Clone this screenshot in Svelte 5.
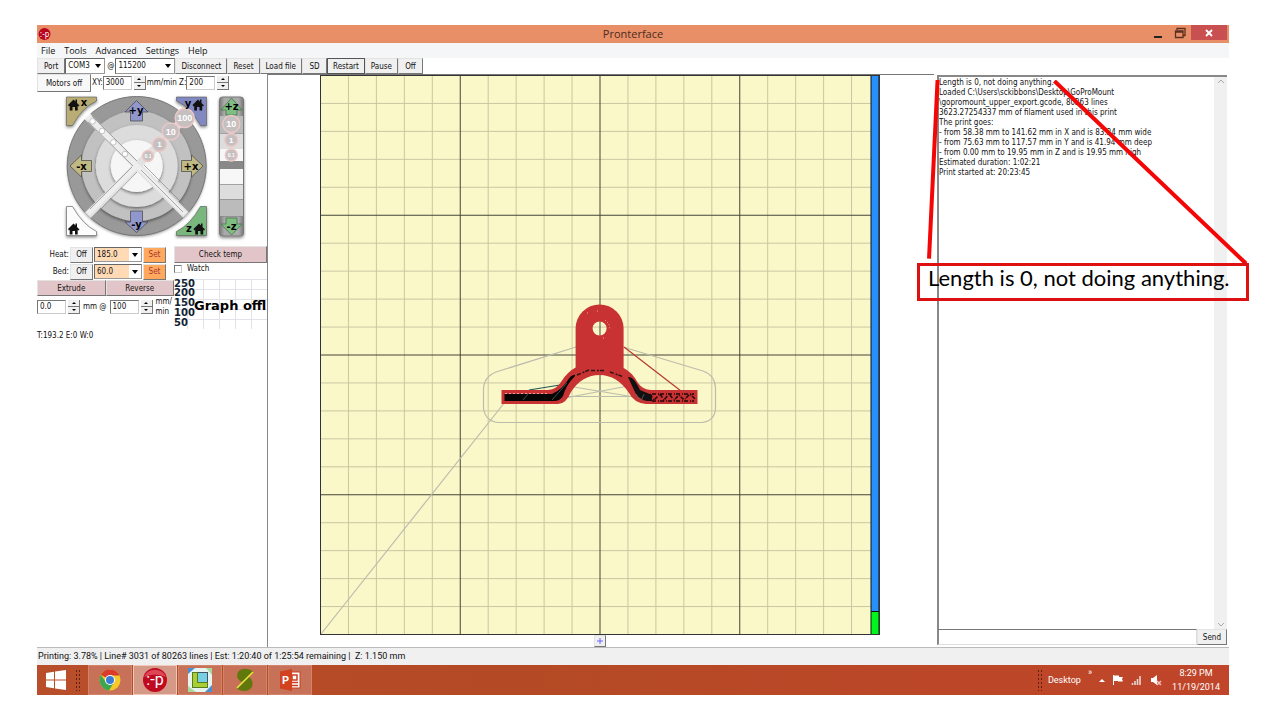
<script>
    const menus = ["File", "Tools", "Advanced", "Settings", "Help"];
    const actions = ["Disconnect", "Reset", "Load file", "SD", "Restart", "Pause", "Off"];

    let xySpeed = "3000";
    let zSpeed = "200";
    let extrudeLength = "0.0";
    let extrudeSpeed = "100";
    let command = "";
    let watch = false;

    const log = [
        "Length is 0, not doing anything.",
        "Loaded C:\\Users\\sckibbons\\Desktop\\GoProMount",
        "\\gopromount_upper_export.gcode, 80263 lines",
        "3623.27254337 mm of filament used in this print",
        "The print goes:",
        "- from 58.38 mm to 141.62 mm in X and is 83.24 mm wide",
        "- from 75.63 mm to 117.57 mm in Y and is 41.94 mm deep",
        "- from 0.00 mm to 19.95 mm in Z and is 19.95 mm high",
        "Estimated duration: 1:02:21",
        "Print started at: 20:23:45"
    ].join("\n");

    // 200mm bed, one line per 10mm
    const cell = 27.95;
    const lines = Array.from({ length: 19 }, (_, i) => i + 1);
    const minor = lines.filter((n) => n % 5 !== 0);
    const major = lines.filter((n) => n % 5 === 0);

    const steps = [
        { x: 148, y: 156, r: 5.5, size: 5, label: "0.1" },
        { x: 159.5, y: 144.5, r: 7, size: 8, label: "1" },
        { x: 170.7, y: 131.5, r: 8.5, size: 9, label: "10" },
        { x: 184.7, y: 118, r: 9.5, size: 9, label: "100" },
        { x: 231.3, y: 124, r: 8.5, size: 9, label: "10" },
        { x: 231.3, y: 140, r: 6.5, size: 8, label: "1" },
        { x: 231.3, y: 155, r: 6, size: 5, label: "0.1" }
    ];
    const dots = [[92.5, 121.3], [102, 131], [113.3, 142.3], [125, 154]];
    const houses = [[74, 104.5], [198.5, 104.5], [74, 228.5], [199.5, 228.5]];
</script>

<div class="window">
    <header class="titlebar">
        <svg class="app-icon" viewBox="0 0 14 14" aria-hidden="true">
            <circle cx="7.500" cy="7" r="6" fill="#b8061d" />
            <text x="7.500" y="10" text-anchor="middle" font-size="8" fill="#fff">:-p</text>
        </svg>
        <h1>Pronterface</h1>
        <div class="window-buttons">
            <button aria-label="Minimize"><svg width="10" height="10"><path d="M1 9h8" stroke="#222" stroke-width="2" /></svg></button>
            <button aria-label="Restore"><svg width="12" height="12"><path d="M3 3V1.500h8v7H9M1.500 4h7.500v6.500h-7.500zM1.500 5h7.500" fill="none" stroke="#5b3020" stroke-width="1.300" /></svg></button>
            <button class="close" aria-label="Close"><svg width="8" height="8"><path d="M1 1l6 6M7 1l-6 6" stroke="#fff" stroke-width="1.800" /></svg></button>
        </div>
    </header>

    <nav class="menubar">
        {#each menus as menu}
        <button>{menu}</button>
        {/each}
    </nav>

    <div class="toolbar">
        <button class="btn port">Port</button>
        <span class="combo com"><select aria-label="Port"><option>COM3</option></select></span>
        <span class="at">@</span>
        <span class="combo baud"><select aria-label="Baud rate"><option>115200</option></select></span>
        {#each actions as action}
        <button class="btn" class:focused={action === "Restart"}>{action}</button>
        {/each}
    </div>

    <main>
        <section class="controls">
            <div class="row speeds">
                <button class="btn motors">Motors off</button>
                <label for="xy">XY:</label>
                <span class="spin"><input id="xy" bind:value={xySpeed} /><span class="arrows"><button aria-label="Faster XY"></button><button class="down" aria-label="Slower XY"></button></span></span>
                <label for="z">mm/min Z:</label>
                <span class="spin"><input id="z" bind:value={zSpeed} /><span class="arrows"><button aria-label="Faster Z"></button><button class="down" aria-label="Slower Z"></button></span></span>
            </div>

            <svg class="jog" viewBox="37 92 230 153" role="img" aria-label="Jog controls">
                <defs>
                    <filter id="soft" x="-10%" y="-10%" width="120%" height="125%">
                        <feDropShadow dx="0" dy="1.500" stdDeviation="1.500" flood-color="#000" flood-opacity="0.500" />
                    </filter>
                    <linearGradient id="bar" x1="0" x2="1" y1="0" y2="0">
                        <stop offset="0" stop-color="#777" /><stop offset="0.200" stop-color="#aaa" /><stop offset="0.800" stop-color="#aaa" /><stop offset="1" stop-color="#777" />
                    </linearGradient>
                    <mask id="quarters">
                        <rect x="37" y="92" width="230" height="153" fill="#fff" />
                        <path d="M82 111L192 221M82 221L192 111" stroke="#000" stroke-width="8" />
                    </mask>
                </defs>
                <circle cx="136.700" cy="166" r="69" fill="#e2e2e2" filter="url(#soft)" />
                <g mask="url(#quarters)">
                    <circle cx="136.700" cy="166" r="69.500" fill="#999" stroke="#777" />
                    <circle cx="136.700" cy="166" r="55" fill="#c1c1c1" filter="url(#soft)" />
                    <circle cx="136.700" cy="166" r="41" fill="#dcdcdc" filter="url(#soft)" />
                    <circle cx="136.700" cy="166" r="26" fill="#f6f6f6" filter="url(#soft)" />
                </g>
                <path d="M88 117L185 214M88 214L137 166" stroke="#eee" stroke-width="5" />
                <path d="M88 122L133 166M92 116L137 161M90 209l42-42M97 213l40-41M141 170l42 42M184 205l-40-40" stroke="#888" stroke-width="0.700" />
                {#each dots as [x, y]}
                <circle cx={x} cy={y} r="2.800" fill="#fff" stroke="#aaa" stroke-width="0.700" />
                {/each}

                <g stroke="#555" stroke-width="0.600" filter="url(#soft)">
                    <path d="M66.500 97h30v4q-14 6-24 24.500h-6z" fill="#b9ad74" />
                    <path d="M206.500 97h-30v4q14 6 24 24.500h6z" fill="#8289c0" />
                    <path d="M66.500 235.500h30v-4q-14-7-24-25h-6z" fill="#fcfcfc" />
                    <path d="M206.500 235.500h-30v-4q14-7 24-25h6z" fill="#79b77d" />
                </g>
                {#each houses as [x, y]}
                <path transform="translate({x} {y}) translate(-6 -5)" d="M0 5.500L5.500 0 7.500 2V0H9v3.500L11.500 6 10.500 7 9.700 6.300V11H7V7.500H4.500V11H1.700V6.300L1 7z" fill="#111" />
                {/each}

                <g stroke="#444" stroke-width="0.700">
                    <path d="M136.500 100.500L148 112h-5.500v9h-12v-9H125z" fill="#9097cc" />
                    <path d="M136.500 232.500L148 222h-5.500v-11h-12v11H125z" fill="#9097cc" />
                    <path d="M70 166L81.500 155v5.500h10v11h-10v5.500z" fill="#c1b984" />
                    <path d="M203 166L191.500 155v5.500h-10v11h10v5.500z" fill="#c1b984" />
                </g>

                <rect x="219.500" y="97" width="24" height="139" rx="3" fill="url(#bar)" stroke="#777" filter="url(#soft)" />
                <rect x="220" y="116" width="23" height="17" fill="#bbb" />
                <rect x="220" y="133" width="23" height="16" fill="#ddd" />
                <rect x="220" y="149" width="23" height="12" fill="#f7f7f7" />
                <rect x="220" y="161" width="23" height="8" fill="#888" />
                <rect x="220" y="169" width="23" height="15" fill="#f7f7f7" />
                <rect x="220" y="184" width="23" height="15" fill="#ddd" />
                <rect x="220" y="199" width="23" height="17" fill="#bbb" />
                <path d="M220 184.500h23M220 199.500h23M220 216.500h23M220 133.500h23" stroke="#888" stroke-width="0.700" />
                <g stroke="#3d6f40" stroke-width="0.700" fill="#80bd83">
                    <path d="M231.500 98L242 110h-5v5h-11v-5h-5z" />
                    <path d="M231.500 235L242 224h-5v-6h-11v6h-5z" />
                </g>

                {#each steps as step}
                <circle cx={step.x} cy={step.y} r={step.r} fill="#c5bfbf" stroke="#ecc8c8" stroke-width="1.500" />
                <text class="step" x={step.x} y={step.y + step.size * 0.36} font-size={step.size}>{step.label}</text>
                {/each}
                <g class="axis" font-size="10">
                    <text x="136" y="114">+y</text><text x="136.500" y="228">-y</text>
                    <text x="81.500" y="170">-x</text><text x="191" y="170">+x</text>
                    <text x="231.500" y="110">+z</text><text x="231.500" y="230">-z</text>
                    <text x="84" y="106">x</text><text x="188" y="107">y</text><text x="189" y="232">z</text>
                </g>
            </svg>

            <div class="heat-and-graph">
                <div class="heat">
                    <div class="row heater">
                        <label for="heat">Heat:</label>
                        <button class="btn">Off</button>
                        <span class="combo warm"><select id="heat"><option>185.0</option></select></span>
                        <button class="btn set">Set</button>
                    </div>
                    <div class="row heater">
                        <label for="bed">Bed:</label>
                        <button class="btn">Off</button>
                        <span class="combo warm"><select id="bed"><option>60.0</option></select></span>
                        <button class="btn set">Set</button>
                    </div>
                    <div class="row extruder">
                        <button class="btn pink">Extrude</button>
                        <button class="btn pink">Reverse</button>
                    </div>
                    <div class="row feed">
                        <span class="spin"><input aria-label="Extrude length" bind:value={extrudeLength} /><span class="arrows"><button aria-label="More"></button><button class="down" aria-label="Less"></button></span></span>
                        <span>mm @</span>
                        <span class="spin"><input aria-label="Extrude speed" bind:value={extrudeSpeed} /><span class="arrows"><button aria-label="Faster"></button><button class="down" aria-label="Slower"></button></span></span>
                        <span class="unit">mm/<br />min</span>
                    </div>
                </div>
                <div class="temps">
                    <button class="btn pink">Check temp</button>
                    <label class="watch"><input type="checkbox" bind:checked={watch} />Watch</label>
                    <svg class="graph" viewBox="0 0 93 50" role="img" aria-label="Temperature graph">
                        <path d="M0 .5h93M0 10.500h93M0 20.500h93M0 30.500h93M0 40.500h93M13.500 0v50M29.500 0v50M45.500 0v50M61.500 0v50M77.500 0v50" stroke="#e2e2ea" />
                        <g font-size="10" fill="#123">
                            <text x="0" y="8">250</text><text x="0" y="17">200</text><text x="0" y="27">150</text>
                            <text x="0" y="37">100</text><text x="0" y="47">50</text>
                        </g>
                        <text x="20" y="31" font-size="13">Graph offl</text>
                    </svg>
                </div>
            </div>
            <p class="reading">T:193.2 E:0 W:0</p>
        </section>

        <section class="preview">
            <svg class="plate" viewBox="320 75 560 560" role="img" aria-label="Print preview">
                <rect x="320.500" y="75.500" width="559" height="559" fill="#faf8c8" />
                {#each minor as n}
                <path d="M{320.5 + n * cell} 75V634M320 {634.5 - n * cell}H880" stroke="#c9c7a2" />
                {/each}
                {#each major as n}
                <path d="M{320.5 + n * cell} 75V634M320 {634.5 - n * cell}H880" stroke="#44443a" />
                {/each}

                <g fill="none" stroke="#bcbcac" stroke-width="1.200">
                    <path d="M321 634L505 402" />
                    <path d="M576 347L496 372Q483.500 377 483.500 390V408Q485 421 498 422.500H702Q715.500 421 715.500 407V388Q715 375 703 371L623 347" />
                    <path d="M565 398L628 386M562 385L634 397M566 396.500H636" />
                </g>
                <path d="M529 390L560 385" stroke="#255" stroke-width="1.200" />
                <path d="M624 347L681 391" stroke="#b8382d" stroke-width="1.200" />
                <path
                    fill="#c83233"
                    fill-rule="evenodd"
                    d="M575.600 328.500A24 24 0 0 1 623.600 328.500V368Q632 372 638 383Q643 390 651 390H697.500V404H646Q634 403 629 393Q617 375 599.600 375Q582 375 571 392Q566 404 558 404H501.500V390H548Q557 389 561 382Q567 372 575.600 367.500zM592.600 328.500a7 7 0 1 0 14 0a7 7 0 1 0-14 0z"
                />
                <path d="M504.500 394H552Q562 390 570 377Q576 373 575 376Q566 385 563 396Q560 401 554 401H504.500z" fill="#050505" />
                <path d="M628 377Q634 376 640 390L652 395V401H647Q637 399 634 390z" fill="#111" />
                <path d="M577 375l12-5M591 370.500h14M610 372l14 5" stroke="#321414" stroke-width="1.500" stroke-dasharray="4 2 2 1" fill="none" />
                <path d="M650 394l4 6 6-6 4 6 5-6 5 6 5-5 5 5 6-6 5 5M652 394h42M652 401h42" stroke="#230808" stroke-width="1.500" stroke-dasharray="4 2 1 1" fill="none" />
                <path d="M505 393.500H549" stroke="#dda0a0" stroke-dasharray="2 2" />
                <path d="M552 400l15-17M523 400l5-6M636 394l3 5M644 394l-3 7" stroke="#58736c" stroke-width="0.700" />
                <path d="M587 313h1M597 311h1M605 320l4 4 1 6M603 338h1" stroke="#e7a3a0" stroke-dasharray="1 2" fill="none" />

                <rect x="870.500" y="75" width="9.500" height="560" fill="#111" />
                <rect x="871.500" y="76" width="7" height="535" fill="#2890fa" />
                <rect x="871.500" y="612" width="7" height="22" fill="#00f51c" />
                <rect x="320.500" y="75.500" width="559" height="559" fill="none" stroke="#333" />
            </svg>
            <button class="btn plus" aria-label="Zoom in"><svg width="8" height="8"><path d="M1 4h6M4 1v6" stroke="#66f" /></svg></button>
        </section>

        <section class="console">
            <div class="log">
                <textarea readonly aria-label="Log" value={log}></textarea>
                <div class="scroll" aria-hidden="true">
                    <svg width="8" height="8"><path d="M1 6l3-3 3 3" fill="none" stroke="#aaa" /></svg>
                    <svg width="8" height="8"><path d="M1 2l3 3 3-3" fill="none" stroke="#aaa" /></svg>
                </div>
            </div>
            <div class="send">
                <input aria-label="Command" bind:value={command} />
                <button class="btn">Send</button>
            </div>
            <div class="callout">
                <svg viewBox="0 0 331 182" aria-hidden="true">
                    <path d="M20.500 0L12 178M137 1L328 183" stroke="#f40606" stroke-width="4" />
                </svg>
                <p>Length is 0, not doing anything.</p>
            </div>
        </section>
    </main>

    <div class="status">Printing: 3.78% | Line# 3031 of 80263 lines | Est: 1:20:40 of 1:25:54 remaining |&nbsp; Z: 1.150 mm</div>

    <footer class="taskbar">
        <button class="start" aria-label="Start">
            <svg width="22" height="22"><path d="M1 4l8-1.200v7.700H1zM10 2.600L21 1v9.500H10zM1 11.500h8v7.700L1 18zM10 11.500h11V21l-11-1.600z" fill="#fff" /></svg>
        </button>
        <span class="grip"></span>
        <button class="task" aria-label="Chrome">
            <svg width="24" height="24">
                <circle cx="12" cy="12" r="10.500" fill="#f5c928" />
                <path d="M12 12L2.900 6.700A10.500 10.500 0 0 1 21.500 7.500H12z" fill="#da3b2b" />
                <path d="M2.900 6.700A10.500 10.500 0 0 0 11 22.500L16 14.300 12 12 8 14.300z" fill="#3fa650" />
                <circle cx="12" cy="12" r="5" fill="#fff" /><circle cx="12" cy="12" r="4" fill="#3a7bd5" />
            </svg>
        </button>
        <button class="task current" aria-label="Pronterface">
            <svg width="26" height="26"><circle cx="13" cy="13" r="12" fill="#c00a20" /><path d="M2 10a12 12 0 0 1 22 0q-11-5-22 0z" fill="#dc4656" /><text x="13" y="18" text-anchor="middle" font-size="16" fill="#fff">:-p</text></svg>
        </button>
        <button class="task" aria-label="Slicer">
            <svg width="26" height="26"><rect x="1" y="1" width="24" height="24" fill="#e6f3ee" /><path d="M1 7V1h7zM25 18v7h-7z" fill="#4b8fd0" /><path d="M1 19v6h8zM19 1h6v7z" fill="#a9d8a0" /><rect x="5.500" y="5.500" width="15" height="15" fill="#77cfe2" stroke="#456" /><path d="M5.500 5.500h5v10h10v5h-15z" fill="#a9cf35" stroke="#587c20" /></svg>
        </button>
        <button class="task" aria-label="Slic3r">
            <svg width="24" height="26"><path d="M20 4Q10-1 5 5Q2 12 9 15L19 6zM4 22q10 5 15-2q2-6-3-10L5 20z" fill="#63780c" /><path d="M4 21L20 5" stroke="#e8ee38" stroke-width="1.500" /></svg>
        </button>
        <button class="task" aria-label="PowerPoint">
            <svg width="22" height="24"><rect x="10" y="4" width="11" height="16" fill="#fff" stroke="#c93f22" /><path d="M13 7h5v5h-5zM12 14.500h7M12 17.500h7" stroke="#c93f22" stroke-width="1.500" fill="none" /><path d="M1 3.500L13 1v22L1 20.500z" fill="#d2421f" /><text x="3" y="16" font-size="11" font-weight="bold" fill="#fff">P</text></svg>
        </button>
        <div class="tray">
            <span class="grip"></span>
            <span>Desktop</span>
            <span class="more">»</span>
            <svg class="up" width="6" height="4"><path d="M0 4l3-3 3 3z" fill="#fff" /></svg>
            <svg width="12" height="12"><path d="M1.500 1v10" stroke="#fff" /><path d="M2 1.500h5V7H2zM7 3h4l-1 2 1 2.500H6z" fill="#fff" /></svg>
            <svg width="12" height="12"><path d="M1.500 9v2M4 7v4M6.500 5v6M9 2v9" stroke="#e8d8d2" stroke-width="1.600" /></svg>
            <svg width="12" height="12"><path d="M1 4h2l4-3v10L3 8H1z" fill="#fff" /><path d="M7 7l4 4M11 7l-4 4" stroke="#fbb" stroke-width="1.500" /></svg>
            <time>8:29 PM<br />11/19/2014</time>
        </div>
    </footer>
</div>

<style>
    :global(body) {
        background: #fff;
    }

    .window {
        box-sizing: border-box;
        height: 100vh;
        padding: 25px 51px 25px 37px;
        display: flex;
        flex-direction: column;
        font: 8px/10px "DejaVu Sans Condensed", "DejaVu Sans", sans-serif;
        color: #111;
    }

    button,
    input,
    select,
    textarea {
        font: inherit;
        color: inherit;
        box-sizing: border-box;
        margin: 0;
        padding: 0;
        border: 0;
        border-radius: 0;
        background: none;
        min-width: 0;
    }

    p, h1 {
        margin: 0;
    }

    svg {
        display: block;
    }

    .titlebar {
        display: grid;
        grid-template-columns: 1fr auto 1fr;
        height: 18px;
        background: #e98f68;
    }

    .app-icon {
        width: 14px;
        height: 14px;
        margin: 2px 0 0;
    }

    h1 {
        font: 11px/18px "Open Sans", sans-serif;
        color: #4a2c20;
    }

    .window-buttons {
        display: flex;
        justify-content: flex-end;
        align-items: flex-start;
        padding-right: 2px;
    }

    .window-buttons button {
        width: 22px;
        height: 15px;
        display: grid;
        place-items: center;
    }

    .window-buttons .close {
        width: 36px;
        background: #c85051;
    }

    .menubar {
        display: flex;
        gap: 9px;
        height: 15px;
        padding-left: 4px;
        background: #f5f6f7;
        font: 9px/15px "Open Sans", sans-serif;
    }

    .toolbar {
        display: flex;
        height: 16px;
    }

    .toolbar .btn {
        min-width: 25px;
    }

    .btn {
        padding: 1px 5px 0;
        background: #f0f0f0;
        border: 1px solid #e3e3e3;
        border-right-color: #777;
        border-bottom-color: #777;
        white-space: nowrap;
    }

    .btn.focused {
        border: 1px solid #555;
    }

    .combo {
        position: relative;
        display: flex;
        border: 1px solid #999;
        border-top-color: #666;
        border-left-color: #666;
        background: #fff;
    }

    .combo select {
        appearance: none;
        width: 100%;
        padding-left: 2px;
    }

    .combo::after {
        content: "";
        position: absolute;
        right: 3px;
        top: 50%;
        margin-top: -2px;
        border: 3px solid transparent;
        border-top: 4px solid #000;
        border-bottom: 0;
        pointer-events: none;
    }

    .port {
        padding: 1px 6px 0;
    }

    .com {
        width: 38px;
    }

    .baud {
        width: 58px;
    }

    .at {
        padding: 3px 1px 0 2px;
    }

    main {
        flex: 1;
        min-height: 0;
        display: grid;
        grid-template-columns: 231px minmax(0, 1fr) 292px;
        grid-template-rows: minmax(0, 1fr);
    }

    .controls {
        border-right: 1px solid #888;
    }

    .row {
        display: flex;
        align-items: center;
    }

    .speeds {
        height: 18px;
    }

    .speeds label {
        padding-left: 1px;
    }

    .motors {
        align-self: stretch;
        width: 54px;
        background: #f8f8f8;
    }

    .spin {
        display: flex;
        height: 14px;
    }

    .spin input {
        width: 29px;
        padding-left: 2px;
        border: 1px solid #ccc;
        border-top-color: #777;
        border-left-color: #777;
    }

    .arrows {
        display: grid;
        grid-template-rows: 1fr 1fr;
        width: 12px;
        margin-left: 2px;
    }

    .arrows button {
        display: grid;
        place-items: center;
        background: #f0f0f0;
        border-right: 1px solid #777;
        border-bottom: 1px solid #777;
    }

    .arrows button::before {
        content: "";
        border: 2px solid transparent;
        border-bottom-color: #000;
        border-top: 0;
    }

    .arrows .down::before {
        border: 2px solid transparent;
        border-top-color: #000;
        border-bottom: 0;
    }

    .jog {
        width: 100%;
        margin-bottom: 1px;
    }

    .jog text {
        font-weight: bold;
        text-anchor: middle;
        font-family: "DejaVu Sans", sans-serif;
    }

    .jog .step {
        fill: #fff;
        font-family: "Liberation Sans", sans-serif;
    }

    .heat-and-graph {
        display: grid;
        grid-template-columns: 137px 1fr;
    }

    .heater {
        height: 17px;
        gap: 1px;
    }

    .heater label {
        width: 32px;
        text-align: right;
    }

    .heater .btn {
        width: 23px;
        height: 16px;
        padding: 0;
    }

    .heater .set {
        background: #ffa95f;
        color: #a33;
    }

    .warm {
        width: 48px;
        height: 15px;
        box-sizing: border-box;
        background: #ffdab5;
    }

    .warm::before {
        content: "";
        position: absolute;
        inset: 0 0 0 auto;
        width: 12px;
        background: #fff;
        pointer-events: none;
    }

    .extruder .btn {
        flex: 1;
        height: 16px;
    }

    .pink {
        background: #e2c5c8;
    }

    .feed {
        height: 22px;
        gap: 3px;
        white-space: nowrap;
    }

    .feed .unit {
        line-height: 10px;
    }

    .temps {
        display: flex;
        flex-direction: column;
    }

    .temps .btn {
        height: 17px;
    }

    .watch {
        display: flex;
        align-items: center;
        gap: 5px;
        height: 11px;
    }

    .watch input {
        appearance: none;
        width: 8px;
        height: 8px;
        border: 1px solid #ccc;
        border-top-color: #777;
        border-left-color: #777;
    }

    .graph {
        width: 100%;
        margin-top: 5px;
        overflow: hidden;
    }

    .graph text {
        font-weight: bold;
        font-family: "DejaVu Sans", sans-serif;
    }

    .reading {
        margin-top: 2px;
    }

    .preview {
        display: flex;
        flex-direction: column;
        align-items: center;
        min-height: 0;
        border-top: 1px solid #777;
        padding-right: 2px;
        margin-right: 3px;
    }

    .plate {
        width: 100%;
        min-height: 0;
        flex: 1;
    }

    .plus {
        display: grid;
        place-items: center;
        width: 12px;
        height: 12px;
        padding: 0;
    }

    .console {
        position: relative;
        display: flex;
        flex-direction: column;
        padding: 1px 2px 2px 0;
    }

    .log {
        flex: 1;
        display: flex;
        border-top: 2px solid #888;
        border-left: 2px solid #888;
    }

    .log textarea {
        flex: 1;
        padding-top: 1px;
        resize: none;
        overflow: hidden;
        outline: 0;
    }

    .scroll {
        display: flex;
        flex-direction: column;
        justify-content: space-between;
        align-items: center;
        width: 13px;
        background: #f0f0f0;
    }

    .send {
        display: flex;
        height: 16px;
    }

    .send input {
        flex: 1;
        border: 1px solid #ddd;
        border-top-color: #777;
        border-left: 2px solid #888;
    }

    .callout {
        position: absolute;
        left: -20px;
        right: -20px;
        top: 6px;
    }

    .callout svg {
        width: 100%;
    }

    .callout p {
        padding: 0 8px 8px;
        border: 3px solid #dd1111;
        font: 22px/24px Lato, sans-serif;
        white-space: nowrap;
        color: #000;
    }

    .status {
        height: 17px;
        padding-left: 1px;
        border-top: 1px solid #bbb;
        background: #f0f0f0;
        font: 9px/17px Roboto, sans-serif;
    }

    .taskbar {
        display: flex;
        gap: 1px;
        height: 30px;
        background: linear-gradient(90deg, #b94e2a, #b44a25 40%, #c0452a);
        color: #fff;
        font: 9px/14px Roboto, sans-serif;
    }

    .taskbar button {
        display: grid;
        place-items: center;
    }

    .start {
        width: 37px;
    }

    .grip {
        width: 7px;
        margin: 4px 5px 4px 0;
        background: radial-gradient(circle, #64200c 0 1px, transparent 1px) 0 0 / 3px 4px;
    }

    .task {
        width: 44px;
        background: #c67158;
        border: 1px solid #d3846b;
    }

    .current {
        background: #d59a87;
        border-color: #f0c9bb;
    }

    .tray {
        display: flex;
        align-items: center;
        gap: 7px;
        margin-left: auto;
        padding-right: 9px;
    }

    .tray .grip {
        align-self: stretch;
        margin-right: -3px;
    }

    .more {
        align-self: flex-start;
    }

    time {
        text-align: center;
        margin-left: 3px;
    }
</style>
